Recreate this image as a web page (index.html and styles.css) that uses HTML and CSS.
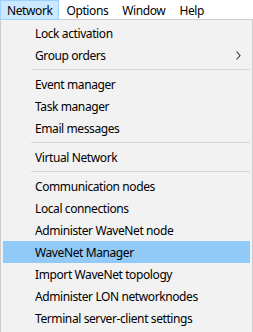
FILE: index.html
```html
<!DOCTYPE html>
<html lang="en">
<head>
    <meta charset="UTF-8">
    <title>Network menu</title>
    <link rel="stylesheet" href="styles.css">
</head>
<body>
    <!-- menu bar -->
    <div class="menubar">
        <span class="menubar-item active">Network</span>
        <span class="menubar-item">Options</span>
        <span class="menubar-item">Window</span>
        <span class="menubar-item">Help</span>
    </div>

    <!-- dropdown -->
    <div class="dropdown">
        <div class="item">Lock activation</div>
        <div class="item">Group orders
            <svg class="arrow" width="5" height="9" viewBox="0 0 5 9"><polyline points="0.5,0.5 4,4.5 0.5,8.5" fill="none" stroke="#333" stroke-width="1.1"/></svg>
        </div>
        <div class="separator"></div>
        <div class="item">Event manager</div>
        <div class="item">Task manager</div>
        <div class="item">Email messages</div>
        <div class="separator"></div>
        <div class="item">Virtual Network</div>
        <div class="separator"></div>
        <div class="item">Communication nodes</div>
        <div class="item">Local connections</div>
        <div class="item">Administer WaveNet node</div>
        <div class="item selected">WaveNet Manager</div>
        <div class="item">Import WaveNet topology</div>
        <div class="item">Administer LON networknodes</div>
        <div class="item">Terminal server-client settings</div>
    </div>
</body>
</html>
```

FILE: styles.css
```css
body {
    margin: 0;
    font-family: "Noto Sans", "Open Sans", sans-serif;
    font-size: 12px;
    letter-spacing: -0.4px;
    color: #000;
    background-color: #fff;
    width: 253px;
    height: 332px;
    overflow: hidden;
}

.menubar {
    display: flex;
    height: 19px;
    background-color: #fff;
}

.menubar-item {
    display: flex;
    align-items: center;
    padding: 0 6px;
    height: 18px;
    border: 1px solid transparent;
    border-bottom: none;
}

.menubar-item.active {
    background-color: #cce8ff;
    border-color: #99d1ff;
    border-bottom: 1px solid #99d1ff;
}

.dropdown {
    background-color: #f2f2f2;
    border: 1px solid #ccc;
    padding: 2px;
    height: 309px;
}

.item {
    display: flex;
    align-items: center;
    justify-content: space-between;
    height: 22px;
    padding: 0 9px 0 32px;
    white-space: nowrap;
}

.item.selected {
    background-color: #91c9f7;
}

.separator {
    height: 7px;
    display: flex;
    align-items: center;
    padding-left: 28px;
}

.separator::after {
    content: "";
    flex: 1;
    height: 1px;
    background-color: #d7d7d7;
}
```
